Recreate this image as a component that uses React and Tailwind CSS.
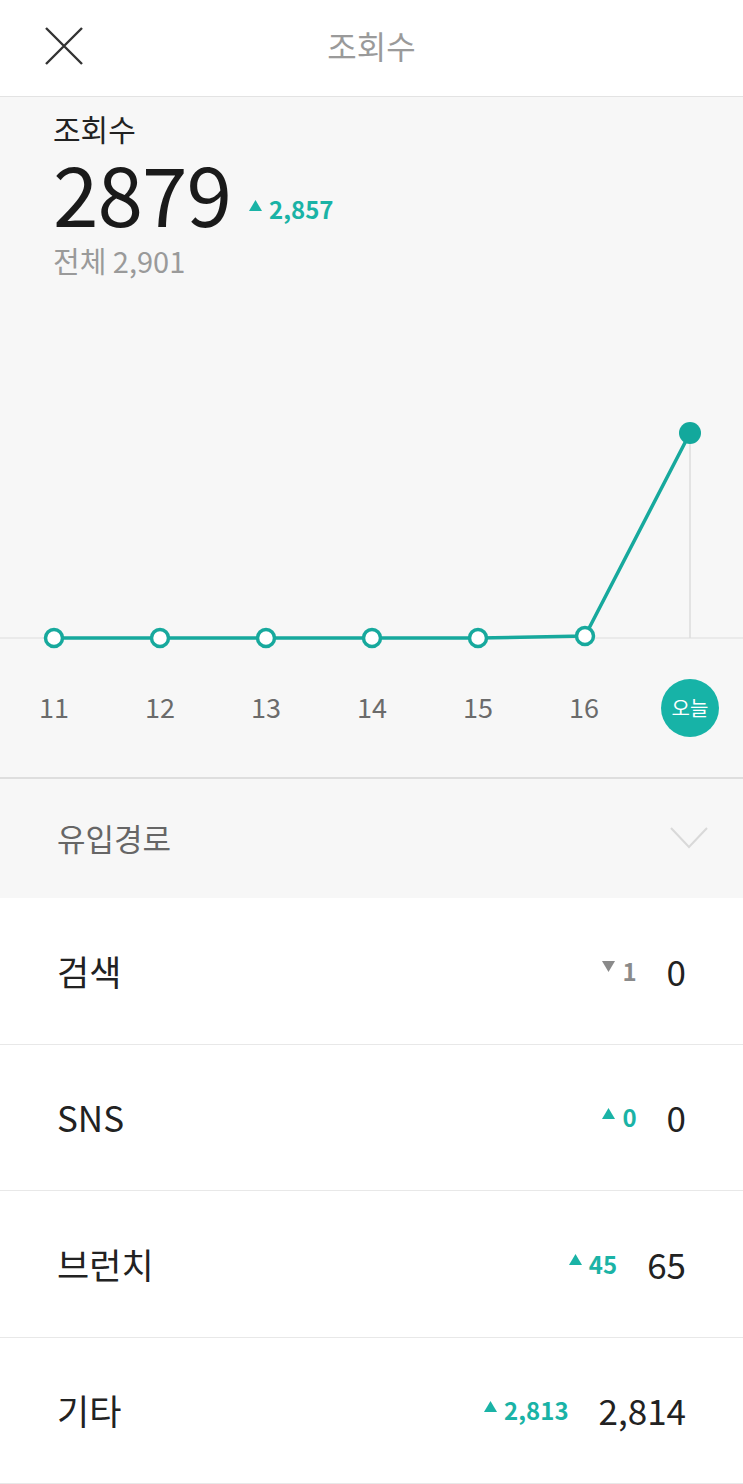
const font = { fontFamily: '"Noto Sans CJK KR", "Noto Sans", sans-serif' };

const days = ['11', '12', '13', '14', '15', '16'];

const sources = [
  { name: '검색', delta: '1', down: true, total: '0' },
  { name: 'SNS', delta: '0', down: false, total: '0' },
  { name: '브런치', delta: '45', down: false, total: '65' },
  { name: '기타', delta: '2,813', down: false, total: '2,814' },
];

function Tri({ down }) {
  return (
    <svg width="13" height="11" viewBox="0 0 13 11" className="mr-[7px] mb-[8px]">
      {down ? (
        <polygon points="0,0 13,0 6.5,11" fill="#8a8a8a" />
      ) : (
        <polygon points="0,11 13,11 6.5,0" fill="#1ab3a6" />
      )}
    </svg>
  );
}

function Chart() {
  const xs = [54, 160, 266, 372, 478, 585];
  const base = 360;
  const peak = 155;
  return (
    <svg width="743" height="383" viewBox="0 0 743 383" className="block">
      <line x1="0" y1={base} x2="743" y2={base} stroke="#e6e6e6" strokeWidth="1.5" />
      <line x1="690" y1={peak} x2="690" y2={base} stroke="#dcdcdc" strokeWidth="1.5" />
      <polyline
        points={`54,${base} 160,${base} 266,${base} 372,${base} 478,${base} 585,${base - 2} 690,${peak}`}
        fill="none"
        stroke="#17a99d"
        strokeWidth="3.5"
        strokeLinejoin="round"
      />
      {xs.map((x, i) => (
        <circle key={x} cx={x} cy={i === 5 ? base - 2 : base} r="8.5" fill="#fff" stroke="#17a99d" strokeWidth="3.5" />
      ))}
      <circle cx="690" cy={peak} r="11" fill="#13a89c" />
    </svg>
  );
}

export default function App() {
  return (
    <div className="w-[743px] min-h-[1484px] bg-white" style={font}>
      {/* Header */}
      <div className="relative h-[97px] flex items-center justify-center border-b border-[#e3e3e3] bg-white">
        <svg width="40" height="40" viewBox="0 0 40 40" className="absolute left-[44px] top-[26px]">
          <path d="M2 2 L38 38 M38 2 L2 38" stroke="#333" strokeWidth="2.4" fill="none" />
        </svg>
        <span className="text-[32px] text-[#9a9a9a] -mt-[6px]">조회수</span>
      </div>

      {/* Summary + chart */}
      <div className="bg-[#f7f7f7] border-b-2 border-[#dedede]">
        <div className="pl-[53px] pt-[13px]">
          <div className="text-[30px] leading-[36px] text-[#222]">조회수</div>
          <div className="flex items-start h-[87px]">
            <span className="mt-[5px] text-[82px] leading-[82px] text-[#1a1a1a] tracking-[-1px]">2879</span>
            <span className="flex items-center ml-[18px] mt-[51px] text-[24px] leading-[24px] font-bold text-[#1ab3a6]">
              <Tri down={false} />
              2,857
            </span>
          </div>
          <div className="mt-[9px] text-[29px] leading-[36px] text-[#9a9a9a]">전체 2,901</div>
        </div>
        <Chart />
        <div className="grid grid-cols-7 w-[742px] ml-[1px] h-[116px] items-start pt-[22px]">
          {days.map((d) => (
            <div key={d} className="text-center text-[27px] leading-[48px] text-[#6b6b6b]">
              {d}
            </div>
          ))}
          <div className="flex justify-center">
            <div className="w-[58px] h-[58px] rounded-full bg-[#17b3a7] flex items-center justify-center text-white text-[20px] -mt-[4px]">
              오늘
            </div>
          </div>
        </div>
      </div>

      {/* Source header */}
      <div className="bg-[#f7f7f7] h-[119px] flex items-center justify-between pl-[57px] pr-[34px]">
        <span className="text-[31px] text-[#666]">유입경로</span>
        <svg width="38" height="22" viewBox="0 0 38 22" className="mr-[1px] -mt-[2px]">
          <polyline points="1,1 19,20 37,1" fill="none" stroke="#d9d9d9" strokeWidth="2" />
        </svg>
      </div>

      {/* Rows */}
      {sources.map((s) => (
        <div key={s.name} className="h-[146.5px] flex items-center justify-between pl-[57px] pr-[57px] border-b border-[#e8e8e8]">
          <span className="text-[35px] text-[#222]">{s.name}</span>
          <div className="flex items-center">
            <span className={`flex items-center text-[24px] font-semibold ${s.down ? 'text-[#8a8a8a]' : 'text-[#1ab3a6]'}`}>
              <Tri down={s.down} />
              {s.delta}
            </span>
            <span className="ml-[30px] text-[35px] text-[#222]">{s.total}</span>
          </div>
        </div>
      ))}
    </div>
  );
}
